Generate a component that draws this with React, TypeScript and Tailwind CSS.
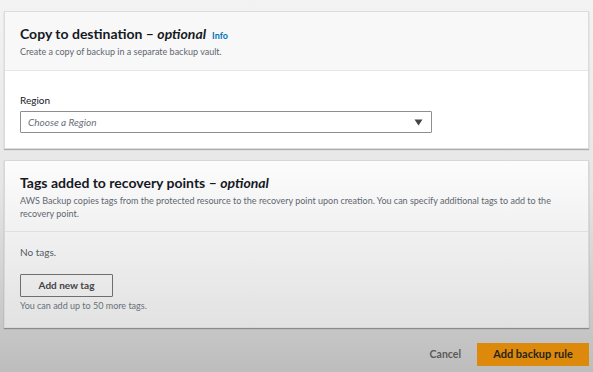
import React from "react";

const font = { fontFamily: "Lato, 'Liberation Sans', sans-serif" };

const CaretDown = () => (
  <svg width="9" height="7" viewBox="0 0 9 7" className="text-[#444]">
    <path d="M0.5 0.5h8L4.5 6.5z" fill="currentColor" />
  </svg>
);

export default function App() {
  return (
    <div
      style={font}
      className="w-[593px] h-[372px] overflow-hidden bg-linear-to-b from-[#f3f3f3] via-[#e6e6e6] to-[#bdbdbd] px-[4px] pt-[11px] flex flex-col"
    >
      {/* copy to destination */}
      <section className="w-[585px] bg-white border border-[#dcdcdc] shadow-[0_1px_1px_rgba(0,0,0,0.25)]">
        <div className="bg-[#f8f8f8] border-b border-[#e6e6e6] px-[15px] pt-[13px] pb-[12px]">
          <h2 className="flex items-baseline gap-[6px] text-[14px] leading-[18px] font-bold text-[#16191f]">
            <span>
              Copy to destination – <i className="font-bold">optional</i>
            </span>
            <span className="text-[9px] font-bold text-[#0073bb]">Info</span>
          </h2>
          <p className="text-[9px] leading-[13px] text-[#5f6670]">
            Create a copy of backup in a separate backup vault.
          </p>
        </div>
        <div className="px-[15px] pt-[22px] pb-[15px]">
          <label className="block text-[10px] leading-[14px] text-[#16191f] mb-[4px]">Region</label>
          <div className="w-[412px] h-[22px] border border-[#8e8e8e] rounded-[1px] bg-white flex items-center justify-between pl-[7px] pr-[8px]">
            <span className="text-[10px] italic text-[#687078]">Choose a Region</span>
            <CaretDown />
          </div>
        </div>
      </section>

      {/* tags */}
      <section className="mt-[11px] w-[585px] bg-linear-to-b from-[#fcfcfc] to-[#e2e2e2] border border-[#d8d8d8] shadow-[0_1px_1px_rgba(0,0,0,0.3)]">
        <div className="border-b border-[#e0e0e0] px-[15px] pt-[13px] pb-[11px]">
          <h2 className="text-[14px] leading-[18px] font-bold text-[#16191f]">
            Tags added to recovery points – <i>optional</i>
          </h2>
          <p className="mt-[2px] text-[9px] leading-[13px] text-[#5f6670]">
            AWS Backup copies tags from the protected resource to the recovery point upon creation. You can specify
            additional tags to add to the recovery point.
          </p>
        </div>
        <div className="px-[15px] pt-[13px] pb-[15px]">
          <p className="text-[10px] leading-[14px] text-[#545b64]">No tags.</p>
          <button className="mt-[15px] w-[93px] h-[23px] border border-[#6e6e6e] rounded-[1px] text-[10px] font-bold text-[#444]">
            Add new tag
          </button>
          <p className="mt-[3px] text-[9px] leading-[12px] text-[#687078]">You can add up to 50 more tags.</p>
        </div>
      </section>

      {/* footer */}
      <div className="mt-[15px] flex items-center justify-end gap-[16px]">
        <button className="text-[10.5px] font-bold text-[#5a5a5a]">Cancel</button>
        <button className="w-[112px] h-[23px] bg-[#dd8a0c] text-[11px] font-bold text-[#2a2418]">
          Add backup rule
        </button>
      </div>
    </div>
  );
}
